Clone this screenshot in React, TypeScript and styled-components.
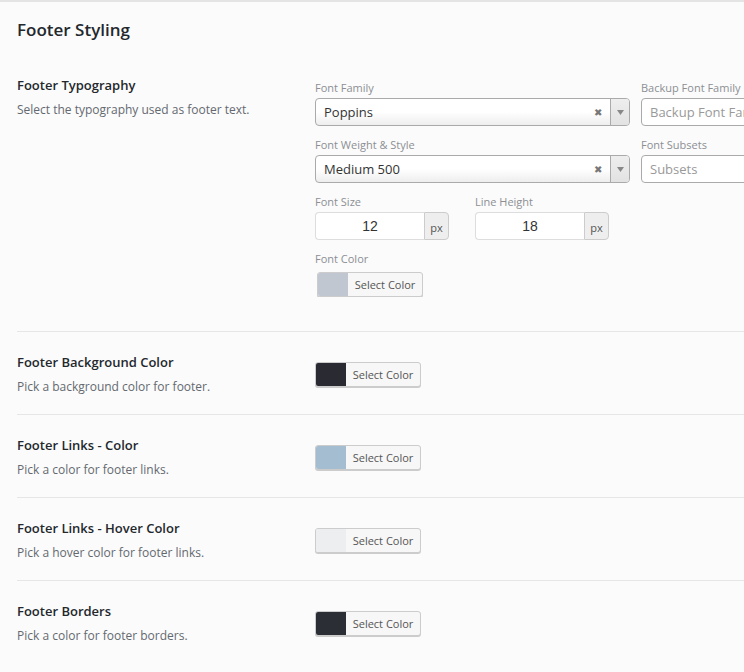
import styled, { createGlobalStyle } from "styled-components";

const GlobalStyle = createGlobalStyle`
  html, body {
    margin: 0;
    padding: 0;
    background: #fbfbfb;
    overflow: hidden;
  }
  body {
    font-family: "Open Sans", "Noto Sans", sans-serif;
    color: #23282d;
  }
`;

type ColorOption = {
  title: string;
  description: string;
  color: string;
};

const colorOptions: ColorOption[] = [
  {
    title: "Footer Background Color",
    description: "Pick a background color for footer.",
    color: "#2a2a33",
  },
  {
    title: "Footer Links - Color",
    description: "Pick a color for footer links.",
    color: "#a4bdd0",
  },
  {
    title: "Footer Links - Hover Color",
    description: "Pick a hover color for footer links.",
    color: "#eceeef",
  },
  {
    title: "Footer Borders",
    description: "Pick a color for footer borders.",
    color: "#2c2e36",
  },
];

function ColorPicker({ color, inset }: { color: string; inset?: boolean }) {
  return (
    <ColorButton $inset={inset}>
      <Swatch $color={color} />
      <ColorLabel>Select Color</ColorLabel>
    </ColorButton>
  );
}

function Select({ value }: { value: string }) {
  return (
    <SelectBox>
      <SelectValue>{value}</SelectValue>
      <ClearMark>✖</ClearMark>
      <ArrowBox>
        <svg width="7" height="5" viewBox="0 0 7 5">
          <path d="M0 0h7L3.5 5z" fill="#888" />
        </svg>
      </ArrowBox>
    </SelectBox>
  );
}

function NumberField({ value }: { value: string }) {
  return (
    <InputGroup>
      <NumberInput>{value}</NumberInput>
      <Addon>px</Addon>
    </InputGroup>
  );
}

function App() {
  return (
    <>
      <GlobalStyle />
      <Page>
        <Heading>Footer Styling</Heading>

        <Row>
          <Info>
            <Title>Footer Typography</Title>
            <Description>Select the typography used as footer text.</Description>
          </Info>
          <Fields>
            <FieldLine>
              <Field $width={315}>
                <Label>Font Family</Label>
                <Select value="Poppins" />
              </Field>
              <Field $width={200}>
                <Label>Backup Font Family</Label>
                <PlainBox>Backup Font Family</PlainBox>
              </Field>
            </FieldLine>
            <FieldLine>
              <Field $width={315}>
                <Label>Font Weight &amp; Style</Label>
                <Select value="Medium 500" />
              </Field>
              <Field $width={200}>
                <Label>Font Subsets</Label>
                <PlainBox>Subsets</PlainBox>
              </Field>
            </FieldLine>
            <FieldLine $gap={26}>
              <Field $width={134}>
                <Label>Font Size</Label>
                <NumberField value="12" />
              </Field>
              <Field $width={134}>
                <Label>Line Height</Label>
                <NumberField value="18" />
              </Field>
            </FieldLine>
            <FieldLine>
              <Field $width={134}>
                <Label>Font Color</Label>
                <ColorPicker color="#c0c7d0" inset />
              </Field>
            </FieldLine>
          </Fields>
        </Row>

        {colorOptions.map((opt) => (
          <Row key={opt.title} $center>
            <Info>
              <Title>{opt.title}</Title>
              <Description>{opt.description}</Description>
            </Info>
            <div>
              <ColorPicker color={opt.color} />
            </div>
          </Row>
        ))}
      </Page>
    </>
  );
}

const Page = styled.div`
  border-top: 2px solid #e4e4e4;
  padding-left: 17px;
  width: 727px;
  height: 670px;
  overflow: hidden;
`;

const Heading = styled.h2`
  margin: 0;
  padding-top: 17px;
  height: 36px;
  font-size: 17px;
  line-height: 22px;
  font-weight: 600;
  color: #23282d;
`;

const Row = styled.div<{ $center?: boolean }>`
  display: grid;
  grid-template-columns: 298px 1fr;
  align-items: ${(p) => (p.$center ? "center" : "start")};
  padding: ${(p) => (p.$center ? "20px 0 17px" : "20px 0 34px")};
  border-bottom: 1px solid #e6e6e6;
  &:last-child {
    border-bottom: none;
  }
`;

const Info = styled.div`
  display: flex;
  flex-direction: column;
  gap: 4px;
`;

const Title = styled.div`
  font-size: 13px;
  line-height: 20px;
  font-weight: 600;
  color: #23282d;
`;

const Description = styled.div`
  font-size: 12px;
  line-height: 21px;
  color: #646970;
`;

const Fields = styled.div`
  display: flex;
  flex-direction: column;
  gap: 11px;
  padding-top: 5px;
  min-width: 0;
  overflow: hidden;
`;

const FieldLine = styled.div<{ $gap?: number }>`
  display: flex;
  gap: ${(p) => p.$gap ?? 11}px;
`;

const Field = styled.div<{ $width: number }>`
  display: flex;
  flex-direction: column;
  gap: 2px;
  width: ${(p) => p.$width}px;
  flex-shrink: 0;
`;

const Label = styled.div`
  font-size: 11px;
  line-height: 16px;
  color: #8c8f94;
  white-space: nowrap;
`;

const SelectBox = styled.div`
  display: flex;
  align-items: center;
  height: 28px;
  box-sizing: border-box;
  border: 1px solid #aaa;
  border-radius: 4px;
  background: linear-gradient(#ffffff 50%, #eeeeee);
  overflow: hidden;
`;

const SelectValue = styled.div`
  flex: 1;
  padding-left: 8px;
  font-size: 13px;
  color: #333;
`;

const ClearMark = styled.span`
  font-size: 10px;
  color: #777;
  margin-right: 8px;
`;

const ArrowBox = styled.div`
  width: 18px;
  align-self: stretch;
  display: flex;
  align-items: center;
  justify-content: center;
  border-left: 1px solid #aaa;
  background: linear-gradient(#eeeeee, #e2e2e2);
`;

const PlainBox = styled.div`
  height: 28px;
  box-sizing: border-box;
  border: 1px solid #aaa;
  border-radius: 4px;
  background: #fff;
  padding-left: 8px;
  font-size: 13px;
  line-height: 26px;
  color: #999;
  white-space: nowrap;
  overflow: hidden;
`;

const InputGroup = styled.div`
  display: flex;
  height: 28px;
`;

const NumberInput = styled.div`
  flex: 1;
  box-sizing: border-box;
  border: 1px solid #ddd;
  border-right: none;
  border-radius: 4px 0 0 4px;
  background: #fff;
  font-family: "Liberation Sans", Arial, sans-serif;
  font-size: 14px;
  line-height: 26px;
  text-align: center;
  color: #333;
`;

const Addon = styled.div`
  width: 25px;
  box-sizing: border-box;
  border: 1px solid #ccc;
  border-radius: 0 4px 4px 0;
  background: #eee;
  font-size: 11px;
  line-height: 30px;
  text-align: center;
  color: #555;
`;

const ColorButton = styled.div<{ $inset?: boolean }>`
  display: flex;
  width: 106px;
  height: 25px;
  box-sizing: border-box;
  margin-left: ${(p) => (p.$inset ? "2px" : "0")};
  margin-top: ${(p) => (p.$inset ? "3px" : "0")};
  border: 1px solid #ccc;
  border-radius: 3px;
  box-shadow: 0 1px 0 #ccc;
  background: #f7f7f7;
  overflow: hidden;
`;

const Swatch = styled.div<{ $color: string }>`
  width: 30px;
  background: ${(p) => p.$color};
`;

const ColorLabel = styled.div`
  flex: 1;
  font-size: 11px;
  line-height: 23px;
  text-align: center;
  color: #555;
`;

export default App;
